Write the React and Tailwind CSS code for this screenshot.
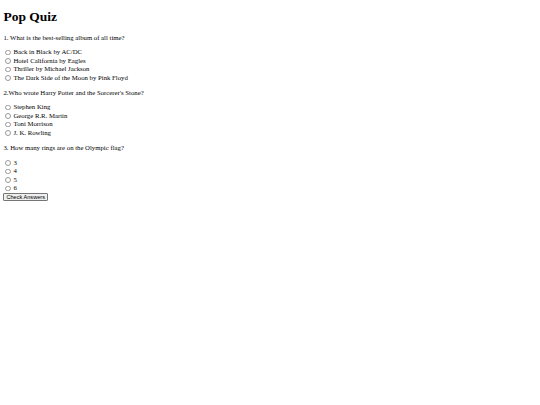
const QUESTIONS = [
  {
    q: '1. What is the best-selling album of all time?',
    name: 'q1',
    options: ['Back in Black by AC/DC', 'Hotel California by Eagles', 'Thriller by Michael Jackson', 'The Dark Side of the Moon by Pink Floyd'],
  },
  {
    q: "2.Who wrote Harry Potter and the Sorcerer's Stone?",
    name: 'q2',
    options: ['Stephen King', 'George R.R. Martin', 'Toni Morrison', 'J. K. Rowling'],
  },
  {
    q: '3. How many rings are on the Olympic flag?',
    name: 'q3',
    options: ['3', '4', '5', '6'],
  },
]

function Option({ label }) {
  return (
    <div className="flex items-center h-[8.5px]">
      <span className="ml-[2px] mr-[2.6px] w-[5.5px] h-[5.5px] shrink-0 rounded-full border-[0.5px] border-[#9a9a9a] bg-white" />
      <span className="leading-[8.5px]">{label}</span>
    </div>
  )
}

export default function App() {
  return (
    <div className="min-h-[405px] bg-white text-black px-[3.4px] pt-[0.1px] font-['Liberation_Serif',serif] text-[6.75px]">
      <h1 className="text-[13.5px] font-bold leading-[15.5px] mt-[9px] mb-[9px]">Pop Quiz</h1>
      {QUESTIONS.map((item) => (
        <div key={item.name}>
          <p className="leading-[7.8px] my-[6.75px]">{item.q}</p>
          {item.options.map((o) => (
            <Option key={o} label={o} />
          ))}
        </div>
      ))}
      <button className="block h-[8px] px-[2.5px] border-[0.5px] border-[#767676] rounded-[1px] bg-[#efefef] text-[5.6px] leading-[7px] font-['Liberation_Sans',sans-serif] ml-[-0.5px]">
        Check Answers
      </button>
    </div>
  )
}
